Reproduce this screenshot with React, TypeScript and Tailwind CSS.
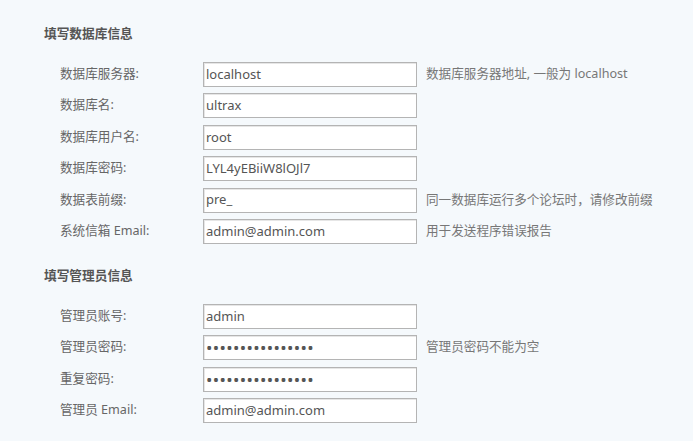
import React from "react";

type Row = { label: string; value: string; help?: string; password?: boolean };

const dbRows: Row[] = [
  { label: "数据库服务器:", value: "localhost", help: "数据库服务器地址, 一般为 localhost" },
  { label: "数据库名:", value: "ultrax" },
  { label: "数据库用户名:", value: "root" },
  { label: "数据库密码:", value: "LYL4yEBiiW8lOJl7" },
  { label: "数据表前缀:", value: "pre_", help: "同一数据库运行多个论坛时，请修改前缀" },
  { label: "系统信箱 Email:", value: "admin@admin.com", help: "用于发送程序错误报告" },
];

const adminRows: Row[] = [
  { label: "管理员账号:", value: "admin" },
  { label: "管理员密码:", value: "••••••••••••••••", help: "管理员密码不能为空", password: true },
  { label: "重复密码:", value: "••••••••••••••••", password: true },
  { label: "管理员 Email:", value: "admin@admin.com" },
];

function FormRow({ r }: { r: Row }) {
  return (
    <div className="flex items-center h-[25px]">
      <div className="w-[159px] pl-[16px] text-[12.6px] text-[#666]">{r.label}</div>
      <div className="w-[214px] h-[25px] border border-[#b4b4b4] bg-white flex items-center pl-[2px] text-[13px] text-[#555] shadow-[inset_1px_1px_0_#e6e6e6]">
        {r.password ? (
          <span className="text-[17px] leading-none tracking-[0.35px] text-[#555]">{r.value}</span>
        ) : (
          r.value
        )}
      </div>
      {r.help && <div className="ml-[9px] text-[12.6px] text-[#777]">{r.help}</div>}
    </div>
  );
}

export default function App() {
  return (
    <div
      className="w-[693px] h-[441px] bg-[#f5f9fc] pl-[44px] pt-[23px] overflow-hidden"
      style={{ fontFamily: '"Noto Sans", "Noto Sans CJK SC", sans-serif' }}
    >
      <div className="h-[20px] leading-[20px] text-[12.7px] font-bold text-[#555]">填写数据库信息</div>
      <div className="mt-[19px] flex flex-col gap-[6.4px]">
        {dbRows.map((r) => (
          <FormRow key={r.label} r={r} />
        ))}
      </div>
      <div className="mt-[21px] h-[20px] leading-[20px] text-[12.7px] font-bold text-[#555]">填写管理员信息</div>
      <div className="mt-[19px] flex flex-col gap-[6.3px]">
        {adminRows.map((r) => (
          <FormRow key={r.label} r={r} />
        ))}
      </div>
    </div>
  );
}
